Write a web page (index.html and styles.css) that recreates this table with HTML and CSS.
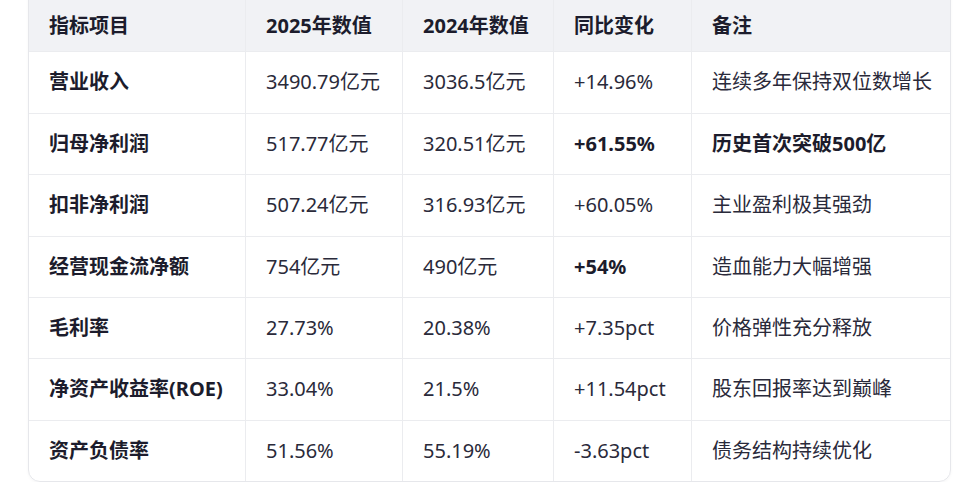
FILE: index.html
```html
<!DOCTYPE html>
<html lang="zh-CN">
<head>
<meta charset="utf-8">
<title>财务指标</title>
<link rel="stylesheet" href="styles.css">
</head>
<body>
<div class="page">
  <div class="card">
    <table class="fin">
      <colgroup>
        <col class="c1"><col class="c2"><col class="c3"><col class="c4"><col class="c5">
      </colgroup>
      <thead>
        <tr><th>指标项目</th><th>2025年数值</th><th>2024年数值</th><th>同比变化</th><th>备注</th></tr>
      </thead>
      <tbody>
        <tr><td class="name">营业收入</td><td>3490.79亿元</td><td>3036.5亿元</td><td>+14.96%</td><td>连续多年保持双位数增长</td></tr>
        <tr><td class="name">归母净利润</td><td>517.77亿元</td><td>320.51亿元</td><td class="strong">+61.55%</td><td class="strong">历史首次突破500亿</td></tr>
        <tr><td class="name">扣非净利润</td><td>507.24亿元</td><td>316.93亿元</td><td>+60.05%</td><td>主业盈利极其强劲</td></tr>
        <tr><td class="name">经营现金流净额</td><td>754亿元</td><td>490亿元</td><td class="strong">+54%</td><td>造血能力大幅增强</td></tr>
        <tr><td class="name">毛利率</td><td>27.73%</td><td>20.38%</td><td>+7.35pct</td><td>价格弹性充分释放</td></tr>
        <tr><td class="name">净资产收益率(ROE)</td><td>33.04%</td><td>21.5%</td><td>+11.54pct</td><td>股东回报率达到巅峰</td></tr>
        <tr><td class="name">资产负债率</td><td>51.56%</td><td>55.19%</td><td>-3.63pct</td><td>债务结构持续优化</td></tr>
      </tbody>
    </table>
  </div>
</div>
</body>
</html>
```
FILE: styles.css
```css
html, body {
  margin: 0;
  padding: 0;
  background: #ffffff;
}
body {
  font-family: "Noto Sans", "Noto Sans CJK SC", sans-serif;
  color: #2a2a3a;
  overflow: hidden;
}
.page {
  padding: 0 0 0 28px;
}
.card {
  width: 921px;
  margin-top: -13px;
  border: 1px solid #e6e7eb;
  border-radius: 12px;
  overflow: hidden;
  box-shadow: 0 1px 3px rgba(0, 0, 0, 0.04);
}
.fin {
  width: 921px;
  table-layout: fixed;
  border-collapse: separate;
  border-spacing: 0;
  font-size: 20px;
}
.c1 { width: 217px; }
.c2 { width: 157px; }
.c3 { width: 151px; }
.c4 { width: 138px; }
.c5 { width: 258px; }
.fin th, .fin td {
  text-align: left;
  padding: 16px 0 16px 20px;
  line-height: 28.4px;
  border-right: 1px solid #ebecef;
  border-bottom: 1px solid #ebecef;
  white-space: nowrap;
  overflow: hidden;
}
.fin th:last-child, .fin td:last-child {
  border-right: none;
}
.fin tbody tr:last-child td {
  border-bottom: none;
}
.fin th {
  background: #f1f2f5;
  color: #1c1c2c;
  font-weight: 700;
  padding-top: 24px;
  padding-bottom: 11px;
}
.fin td.name {
  font-weight: 700;
  color: #1c1c2c;
}
.fin td.strong {
  font-weight: 700;
  color: #1c1c2c;
}
```
